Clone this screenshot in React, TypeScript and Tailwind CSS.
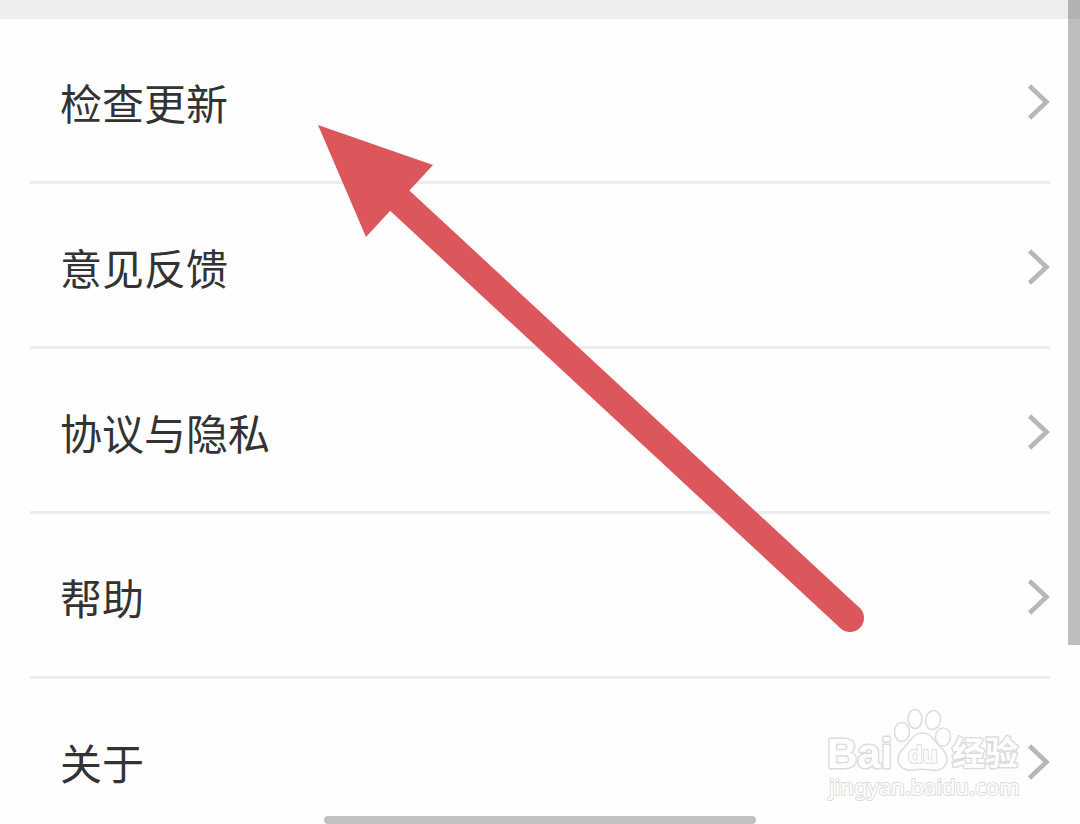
function Chevron() {
  return (
    <svg viewBox="0 0 24 40" className="w-6 h-10 shrink-0" fill="none" aria-hidden="true">
      <path d="M3.5 4 L20.5 20 L3.5 36" stroke="#b7b7b7" strokeWidth="4.6" />
    </svg>
  );
}

function Arrow() {
  return (
    <svg
      viewBox="0 0 548 508"
      className="absolute left-[318px] top-[125px] w-[548px] h-[508px] pointer-events-none"
      aria-hidden="true"
    >
      <polygon points="0,0 115,40 91,66 72,86 48,112" fill="#db575c" />
      <line
        x1="80"
        y1="74"
        x2="532"
        y2="493"
        stroke="#db575c"
        strokeWidth="28"
      />
      <circle cx="532" cy="493" r="14" fill="#db575c" />
    </svg>
  );
}

function Watermark() {
  return (
    <svg
      viewBox="0 0 200 100"
      className="absolute right-[54px] bottom-[20px] w-[200px] h-[100px] pointer-events-none"
      fill="#ffffff"
      stroke="#dcdcdc"
      strokeWidth="1.5"
      strokeLinejoin="round"
    >
      <g paintOrder="stroke" strokeWidth="3" fontWeight="700">
        <text x="1" y="64" fontSize="42" fontFamily="Liberation Sans, sans-serif">
          Bai
        </text>
        <text x="126" y="61" fontSize="33" fontFamily="Noto Sans CJK SC, sans-serif">
          经验
        </text>
      </g>

      {/* paw */}
      <ellipse cx="76" cy="28" rx="7.5" ry="9.5" />
      <ellipse cx="89" cy="15" rx="7" ry="9.5" />
      <ellipse cx="107" cy="16" rx="7.5" ry="9.5" transform="rotate(12 107 16)" />
      <ellipse cx="117" cy="33" rx="7.5" ry="9" />
      <path d="M96 29 C90 29 87 33 83 38 C78 44 72 48 72 55 C72 63 79 67 86 66 C93 65 99 65 105 66 C114 68 121 63 121 55 C121 48 115 44 110 38 C106 33 103 29 96 29 Z" />
      <text
        x="82"
        y="59"
        fontSize="24"
        fontFamily="Liberation Sans, sans-serif"
        fontWeight="700"
        strokeWidth="2"
        paintOrder="stroke"
      >
        du
      </text>

      <text
        x="3"
        y="91"
        fontSize="22"
        fontFamily="Noto Sans, sans-serif"
        strokeWidth="2"
        paintOrder="stroke"
      >
        jingyan.baidu.com
      </text>
    </svg>
  );
}

export default function App() {
  const items = ["检查更新", "意见反馈", "协议与隐私", "帮助", "关于"];

  return (
    <main className="relative h-screen overflow-hidden bg-[#fefefe] font-['Noto_Sans_CJK_SC',sans-serif]">
      <div className="h-[19px] bg-[#eeeeee]" />

      <ul className="px-[30px]">
        {items.map((item) => (
          <li key={item} className="border-b-3 border-[#ececec]">
            <button
              type="button"
              className="flex w-full h-[162px] items-center justify-between pl-[30px] pt-1 text-left text-[42px] leading-[60px] text-[#333333] cursor-pointer"
            >
              <span>{item}</span>
              <Chevron />
            </button>
          </li>
        ))}
      </ul>

      {/* Scrollbar */}
      <div className="absolute right-0 top-0 w-3 h-[645px] bg-black/25" />

      <Arrow />
      <Watermark />

      {/* Home indicator */}
      <div className="absolute bottom-0 left-1/2 -translate-x-1/2 w-2/5 h-2 rounded-full bg-[#c1c1c1]" />
    </main>
  );
}
